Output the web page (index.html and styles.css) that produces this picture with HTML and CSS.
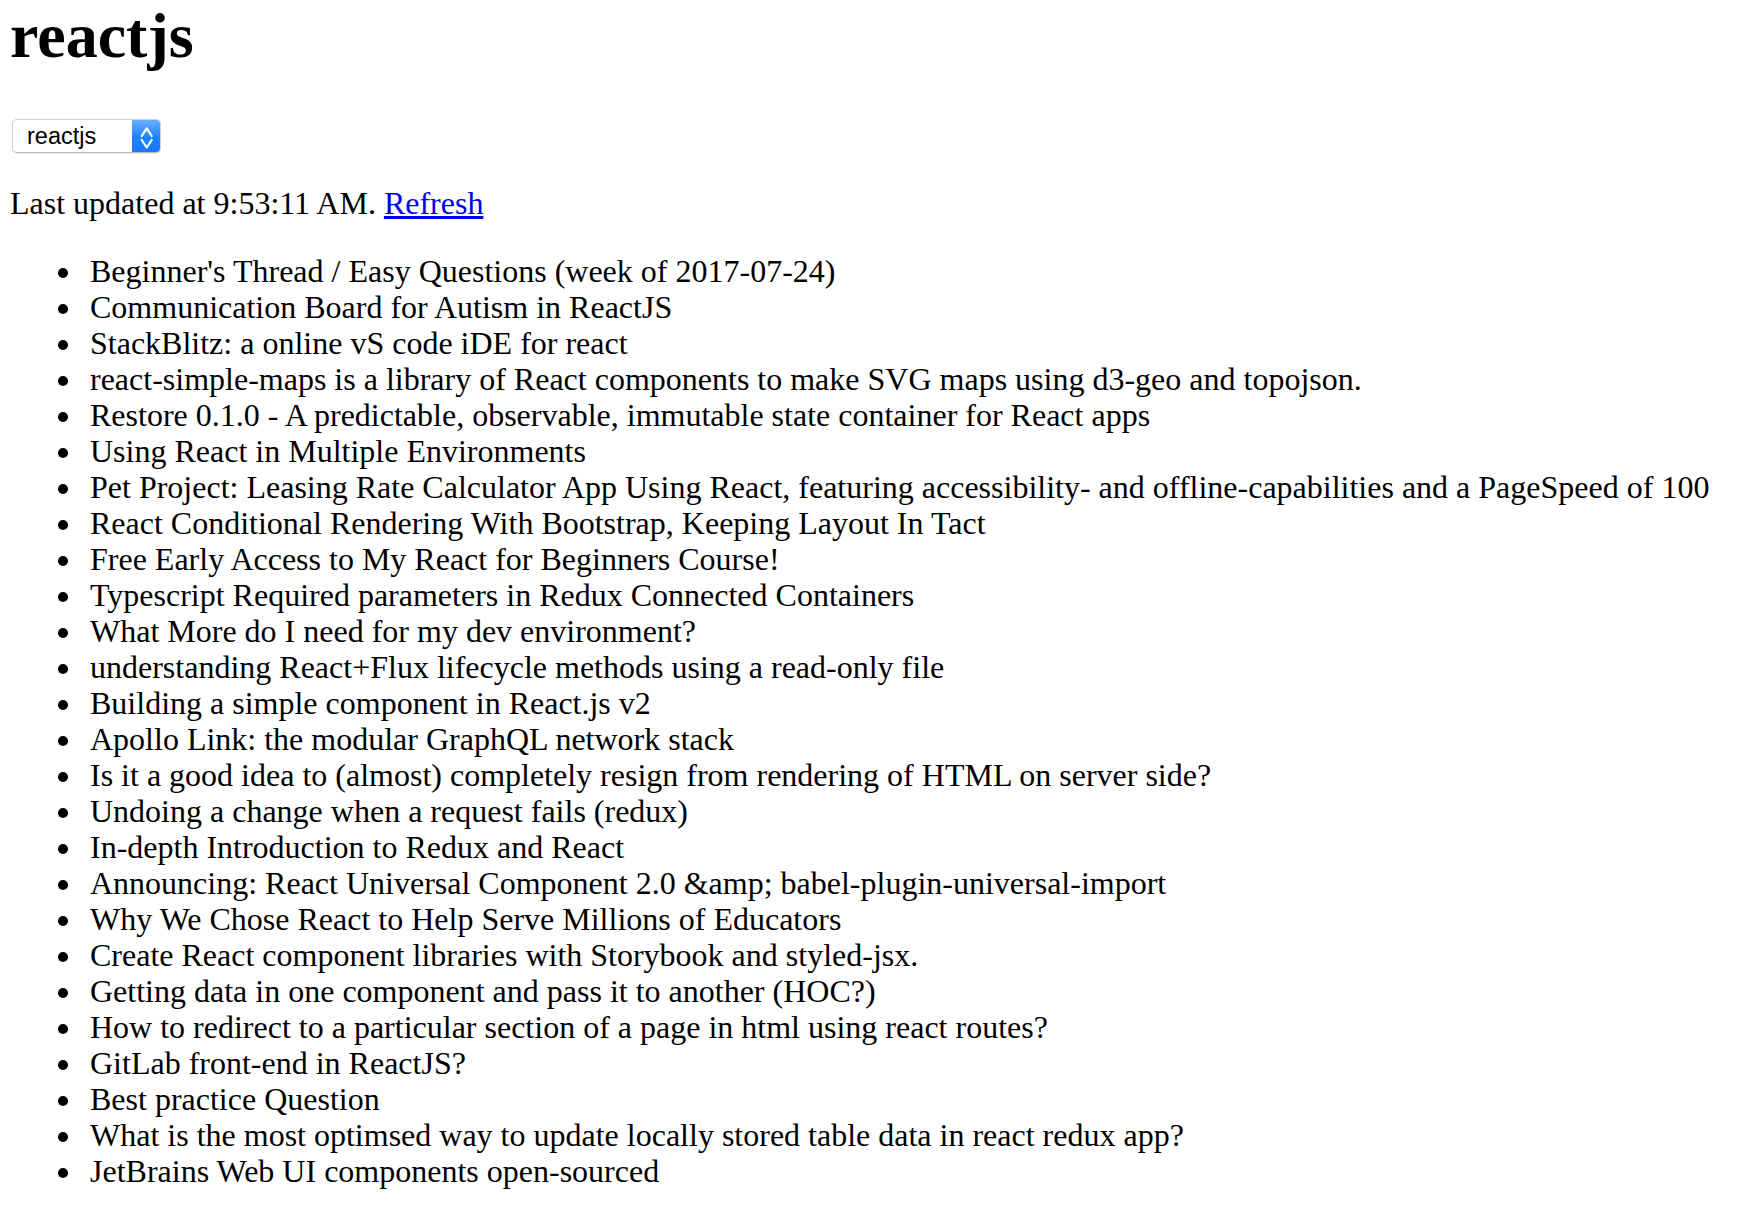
FILE: index.html
```html
<!DOCTYPE html>
<html lang="en">
<head>
<meta charset="utf-8">
<title>reactjs</title>
<link rel="stylesheet" href="styles.css">
</head>
<body>
<h1 class="title">reactjs</h1>
<div class="picker">
  <select class="picker-select">
    <option>reactjs</option>
  </select>
  <span class="picker-arrows" aria-hidden="true">
    <svg width="29" height="34" viewBox="0 0 29 34">
      <polyline points="9.7,17 14.7,9.3 19.7,17" fill="none" stroke="#fff" stroke-width="2.2" stroke-linecap="round" stroke-linejoin="round"/>
      <polyline points="9.7,21 14.7,28.5 19.7,21" fill="none" stroke="#fff" stroke-width="2.2" stroke-linecap="round" stroke-linejoin="round"/>
    </svg>
  </span>
</div>
<p class="status">Last updated at 9:53:11 AM. <a href="#" class="refresh">Refresh</a></p>
<ul class="posts">
  <li>Beginner's Thread / Easy Questions (week of 2017-07-24)</li>
  <li>Communication Board for Autism in ReactJS</li>
  <li>StackBlitz: a online vS code iDE for react</li>
  <li>react-simple-maps is a library of React components to make SVG maps using d3-geo and topojson.</li>
  <li>Restore 0.1.0 - A predictable, observable, immutable state container for React apps</li>
  <li>Using React in Multiple Environments</li>
  <li>Pet Project: Leasing Rate Calculator App Using React, featuring accessibility- and offline-capabilities and a PageSpeed of 100</li>
  <li>React Conditional Rendering With Bootstrap, Keeping Layout In Tact</li>
  <li>Free Early Access to My React for Beginners Course!</li>
  <li>Typescript Required parameters in Redux Connected Containers</li>
  <li>What More do I need for my dev environment?</li>
  <li>understanding React+Flux lifecycle methods using a read-only file</li>
  <li>Building a simple component in React.js v2</li>
  <li>Apollo Link: the modular GraphQL network stack</li>
  <li>Is it a good idea to (almost) completely resign from rendering of HTML on server side?</li>
  <li>Undoing a change when a request fails (redux)</li>
  <li>In-depth Introduction to Redux and React</li>
  <li>Announcing: React Universal Component 2.0 &amp;amp; babel-plugin-universal-import</li>
  <li>Why We Chose React to Help Serve Millions of Educators</li>
  <li>Create React component libraries with Storybook and styled-jsx.</li>
  <li>Getting data in one component and pass it to another (HOC?)</li>
  <li>How to redirect to a particular section of a page in html using react routes?</li>
  <li>GitLab front-end in ReactJS?</li>
  <li>Best practice Question</li>
  <li>What is the most optimsed way to update locally stored table data in react redux app?</li>
  <li>JetBrains Web UI components open-sourced</li>
</ul>
</body>
</html>
```

FILE: styles.css
```css
html, body {
  background: #fff;
}

body {
  margin: 0 10px;
  font-family: "Liberation Serif", "Times New Roman", serif;
  font-size: 32px;
  line-height: 36px;
  color: #000;
}

.title {
  margin: 0 0 47px 0;
  font-size: 64px;
  line-height: 72px;
  font-weight: bold;
}

.picker {
  display: flex;
  width: 149px;
  height: 34px;
  margin-left: 2px;
  box-sizing: border-box;
  border: 1px solid #d0d0d0;
  border-bottom-color: #b8b8b8;
  border-radius: 5px;
  overflow: hidden;
  background: #fff;
  box-shadow: 0 1px 1px rgba(0, 0, 0, 0.08);
}

.picker-select {
  -webkit-appearance: none;
  appearance: none;
  flex: 1;
  min-width: 0;
  border: 0;
  margin: 0;
  padding: 0 0 0 14px;
  background: transparent;
  font-family: "Liberation Sans", Arial, sans-serif;
  font-size: 23.5px;
  color: #000;
  outline: none;
}

.picker-arrows {
  display: flex;
  width: 29px;
  margin: -1px -1px -1px 0;
  background: linear-gradient(#6cb2ff, #1f80ff 55%, #1677f9);
}

.status {
  margin: 32px 0;
}

.refresh {
  color: #0000ee;
  text-decoration: underline;
}

.posts {
  margin: 32px 0;
  padding-left: 80px;
  list-style: none;
}

.posts li::before {
  content: "";
  display: inline-block;
  width: 10px;
  height: 10px;
  margin-left: -32px;
  margin-right: 22px;
  border-radius: 50%;
  background: #000;
  vertical-align: 4px;
}
```
